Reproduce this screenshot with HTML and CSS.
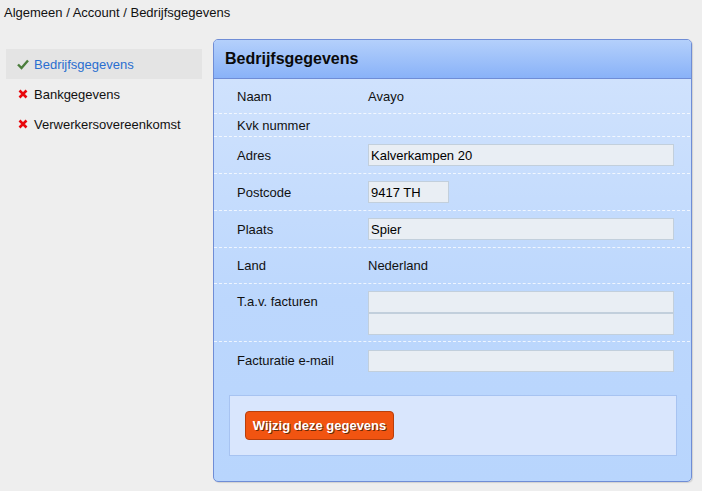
FILE: index.html
```html
<!DOCTYPE html>
<html lang="nl">
<head>
<meta charset="utf-8">
<title>Bedrijfsgegevens</title>
<link rel="stylesheet" href="styles.css">
</head>
<body>
<div class="crumbs">Algemeen / Account / Bedrijfsgegevens</div>
<div class="main">
  <ul class="side">
    <li class="item active">
      <svg class="ic" width="12" height="12" viewBox="0 0 12 12"><path d="M1 6.5 L4.5 10 L11 2.5" fill="none" stroke="#4b7d3c" stroke-width="2.4"/></svg>
      <span>Bedrijfsgegevens</span>
    </li>
    <li class="item">
      <svg class="ic" width="12" height="12" viewBox="0 0 12 12"><path d="M2.5 2.5 L9.5 9.5 M9.5 2.5 L2.5 9.5" fill="none" stroke="#e8060b" stroke-width="2.6"/></svg>
      <span>Bankgegevens</span>
    </li>
    <li class="item">
      <svg class="ic" width="12" height="12" viewBox="0 0 12 12"><path d="M2.5 2.5 L9.5 9.5 M9.5 2.5 L2.5 9.5" fill="none" stroke="#e8060b" stroke-width="2.6"/></svg>
      <span>Verwerkersovereenkomst</span>
    </li>
  </ul>
  <div class="panel">
    <div class="head">Bedrijfsgegevens</div>
    <div class="body">
      <div class="row h34"><div class="lbl">Naam</div><div class="val">Avayo</div></div>
      <div class="row h22"><div class="lbl">Kvk nummer</div></div>
      <div class="row h36"><div class="lbl">Adres</div><input class="inp wide" value="Kalverkampen 20"></div>
      <div class="row h36"><div class="lbl">Postcode</div><input class="inp short" value="9417 TH"></div>
      <div class="row h36"><div class="lbl">Plaats</div><input class="inp wide" value="Spier"></div>
      <div class="row h35"><div class="lbl">Land</div><div class="val">Nederland</div></div>
      <div class="row tall"><div class="lbl top">T.a.v. facturen</div><div class="stack"><input class="inp wide" value=""><input class="inp wide" value=""></div></div>
      <div class="row h36 last"><div class="lbl">Facturatie e-mail</div><input class="inp wide" value=""></div>
      <div class="actions"><button class="btn">Wijzig deze gegevens</button></div>
    </div>
  </div>
</div>
</body>
</html>
```
FILE: styles.css
```css
* { box-sizing: border-box; }
body {
  margin: 0;
  background: #eeeeee;
  font-family: Arial, "Liberation Sans", sans-serif;
  font-size: 13px;
  color: #111;
  width: 702px;
  height: 491px;
  overflow: hidden;
}
.crumbs {
  height: 39px;
  padding: 5px 0 0 4px;
  line-height: 16px;
}
.main {
  display: flex;
  align-items: flex-start;
}
.side {
  list-style: none;
  margin: 10px 0 0 6px;
  padding: 0;
  width: 196px;
}
.item {
  height: 30px;
  display: flex;
  align-items: center;
  padding-left: 11px;
  gap: 5px;
}
.item .ic { flex: none; margin-top: -1px; }
.item.active { background: #e4e4e4; color: #2a6ed0; }
.panel {
  margin-left: 11px;
  width: 479px;
  height: 443px;
  border: 1px solid #6f8dd6;
  border-radius: 5px;
  overflow: hidden;
  box-shadow: 1px 1px 1px rgba(0,0,0,0.12);
  background: linear-gradient(#d3e4fd 0, #bcd7fd 260px, #b8d5fd 100%);
}
.head {
  height: 39px;
  border-bottom: 1px solid #6f8dd6;
  background: linear-gradient(#b4d0fb, #89b2f8);
  font-weight: bold;
  font-size: 16px;
  line-height: 38px;
  padding-left: 11px;
  color: #0a0a0a;
}
.row {
  display: flex;
  align-items: center;
  padding-left: 23px;
  margin-right: 1px;
  border-bottom: 1px dashed rgba(255,255,255,0.75);
}
.row.last { border-bottom: none; }
.h34 { height: 35px; }
.h22 { height: 23px; }
.h36 { height: 37px; }
.h35 { height: 36px; }
.tall { height: 58px; align-items: flex-start; padding-top: 7px; }
.lbl { width: 131px; flex: none; }
.lbl.top { line-height: 22px; }
.val { color: #111; }
.inp {
  height: 22px;
  border: 1px solid #c2cfdc;
  background: #e9eef4;
  font-family: Arial, "Liberation Sans", sans-serif;
  font-size: 13px;
  color: #000;
  padding: 0 2px;
  margin: 0;
  outline: none;
}
.inp.wide { width: 306px; }
.inp.short { width: 81px; }
.stack { display: flex; flex-direction: column; gap: 0; }
.actions {
  margin: 16px 14px 0 15px;
  height: 61px;
  border: 1px solid #a7c3f1;
  background: #d9e6fd;
  padding: 15px 0 0 15px;
}
.btn {
  height: 29px;
  width: 149px;
  border: 1px solid #b83f0c;
  border-radius: 4px;
  background: #f15411;
  color: #fff;
  font-family: Arial, "Liberation Sans", sans-serif;
  font-weight: bold;
  font-size: 13px;
  text-shadow: 1px 1px 0 #6a2a08;
  padding: 0;
  cursor: pointer;
}
```
